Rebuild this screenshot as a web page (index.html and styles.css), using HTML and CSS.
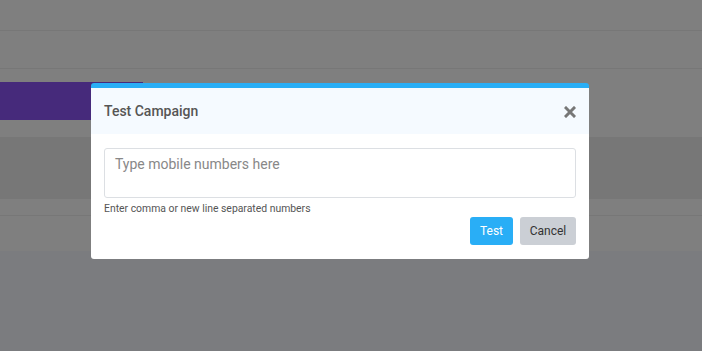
FILE: index.html
```html
<!DOCTYPE html>
<html lang="en">
<head>
  <meta charset="UTF-8">
  <title>Test Campaign</title>
  <link rel="stylesheet" href="styles.css">
</head>
<body>
  <!-- page behind the modal -->
  <div class="page">
    <div class="row row-top"></div>
    <div class="row row-second"></div>
    <div class="tab-bar">
      <div class="tab-active"></div>
    </div>
    <div class="panel"></div>
    <div class="row row-third"></div>
  </div>

  <div class="overlay"></div>

  <!-- Test campaign modal -->
  <div class="modal">
    <div class="modal-header">
      <span class="modal-title">Test Campaign</span>
      <button class="close-btn" aria-label="Close">
        <svg width="12" height="12" viewBox="0 0 12 12">
          <path d="M2 2 L10 10 M10 2 L2 10" stroke="#777" stroke-width="3" stroke-linecap="square"/>
        </svg>
      </button>
    </div>
    <div class="modal-body">
      <textarea class="numbers" placeholder="Type mobile numbers here"></textarea>
      <div class="help-text">Enter comma or new line separated numbers</div>
      <div class="actions">
        <button class="btn btn-test">Test</button>
        <button class="btn btn-cancel">Cancel</button>
      </div>
    </div>
  </div>
</body>
</html>
```

FILE: styles.css
```css
* {
  box-sizing: border-box;
  font-family: 'Roboto', 'Liberation Sans', sans-serif;
}

body {
  margin: 0;
  background-color: #f6f8fe;
  height: 100vh;
  overflow: hidden;
}

.page {
  background-color: #fff;
  height: 251px;
}

.row {
  border-bottom: 1px solid #eee;
}

.row-top {
  height: 31px;
}

.row-second {
  height: 38px;
}

.tab-bar {
  padding-top: 13px;
  height: 68px;
}

.tab-active {
  width: 143px;
  height: 38px;
  background-color: #8c54f6;
}

.panel {
  height: 62px;
  background-color: #eeeeee;
}

.row-third {
  height: 17px;
}

.overlay {
  position: fixed;
  inset: 0;
  background-color: rgba(0, 0, 0, 0.5);
}

.modal {
  position: absolute;
  top: 83px;
  left: 91px;
  width: 498px;
  background-color: #fff;
  border-top: 5px solid #29aef6;
  border-radius: 3px;
  overflow: hidden;
}

.modal-header {
  display: flex;
  justify-content: space-between;
  align-items: center;
  height: 46px;
  padding: 0 13px;
  background-color: #f5faff;
}

.modal-title {
  font-size: 14px;
  font-weight: 500;
  color: #555;
}

.close-btn {
  display: flex;
  border: none;
  background: none;
  padding: 0;
  margin-top: 1px;
  cursor: pointer;
}

.modal-body {
  padding: 14px 13px;
}

.numbers {
  display: block;
  width: 100%;
  height: 50px;
  resize: none;
  border: 1px solid #dcdfe3;
  border-radius: 3px;
  padding: 7px 10px;
  font-size: 14px;
  color: #333;
  outline: none;
}

.numbers::placeholder {
  color: #888;
}

.help-text {
  font-size: 10.4px;
  line-height: 12px;
  color: #555;
  margin-top: 5px;
}

.actions {
  display: flex;
  justify-content: flex-end;
  gap: 7px;
  margin-top: 2px;
}

.btn {
  height: 28px;
  border: none;
  border-radius: 3px;
  font-size: 12px;
  cursor: pointer;
}

.btn-test {
  width: 43px;
  background-color: #29aef6;
  color: #fff;
}

.btn-cancel {
  width: 56px;
  background-color: #cbcfd5;
  color: #333;
}
```
